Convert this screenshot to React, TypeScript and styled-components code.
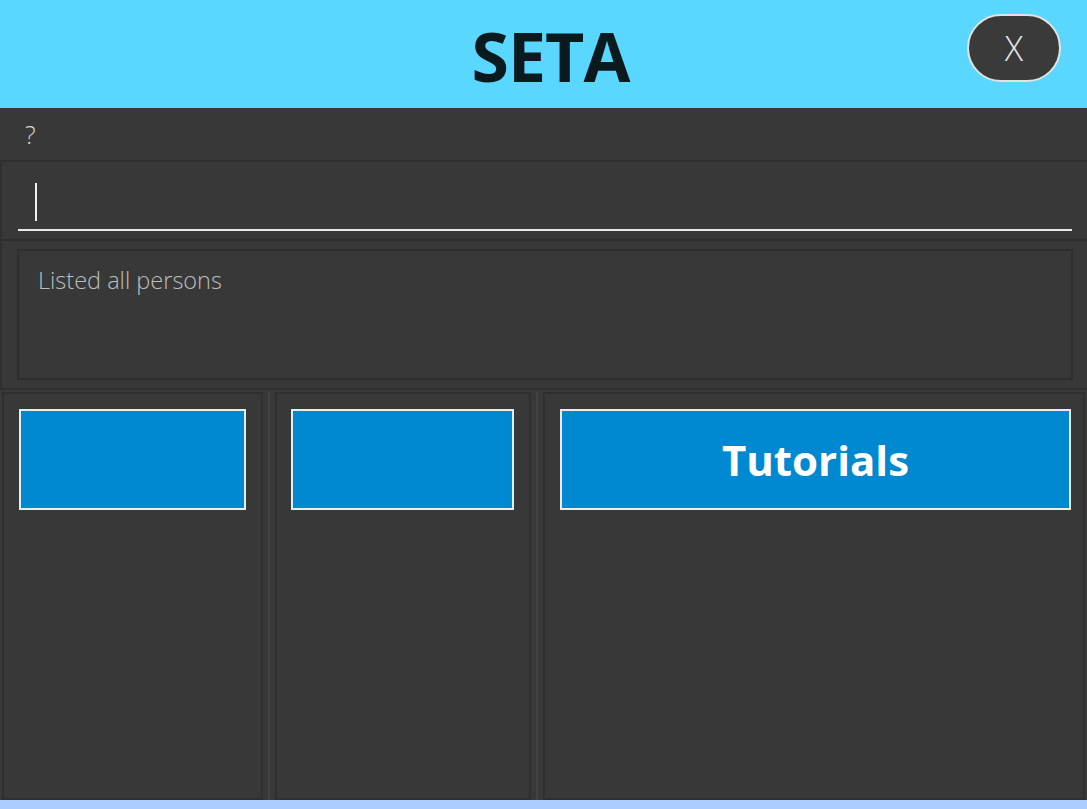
import React from "react";
import styled, { createGlobalStyle } from "styled-components";

const Global = createGlobalStyle`
  html, body { margin: 0; padding: 0; background: #383838; }
  body { font-family: "Open Sans", "Noto Sans", "Liberation Sans", sans-serif; }
  * { box-sizing: border-box; }
`;

const Window = styled.div`
  width: 1087px;
  height: 809px;
  display: flex;
  flex-direction: column;
  background: #383838;
  overflow: hidden;
`;

const Header = styled.header`
  height: 108px;
  flex: none;
  background: #5ad7ff;
  display: flex;
  align-items: center;
  justify-content: center;
  position: relative;
`;

const Title = styled.h1`
  margin: 0;
  font-family: "Open Sans", "Noto Sans", sans-serif;
  font-weight: 700;
  font-size: 68px;
  line-height: 1;
  color: #0a1a1f;
  letter-spacing: -1px;
  margin-left: 14px;
  margin-top: 4px;
`;

const CloseButton = styled.button`
  position: absolute;
  right: 26px;
  top: 14px;
  width: 94px;
  height: 68px;
  border-radius: 34px;
  border: 2px solid #e2e2e2;
  background: #3a3a3a;
  color: #e6e6e6;
  font-family: "Open Sans", sans-serif;
  font-weight: 300;
  font-size: 34px;
  line-height: 1;
  display: flex;
  align-items: center;
  justify-content: center;
  padding: 0;
`;

const MenuBar = styled.div`
  height: 54px;
  flex: none;
  display: flex;
  align-items: center;
  padding-left: 25px;
  border-bottom: 2px solid #2f2f2f;
`;

const MenuItem = styled.span`
  font-size: 25px;
  font-weight: 300;
  color: #d0d0d0;
`;

const CommandSection = styled.div`
  height: 79px;
  flex: none;
  padding: 12px 15px 0 16px;
  border-left: 2px solid #2f2f2f;
  border-bottom: 2px solid #2f2f2f;
`;

const CommandField = styled.div`
  height: 57px;
  border-bottom: 2px solid #e8e8e8;
  display: flex;
  align-items: center;
  padding-left: 17px;
`;

const Caret = styled.div`
  width: 2px;
  height: 38px;
  background: #f0f0f0;
  margin-top: 0px;
`;

const ResultSection = styled.div`
  height: 149px;
  flex: none;
  padding: 8px 14px 8px 15px;
  border-left: 2px solid #2f2f2f;
  border-bottom: 2px solid #2f2f2f;
`;

const ResultBox = styled.div`
  height: 100%;
  border: 2px solid #2e2e2e;
  padding: 13px 19px;
  color: #bdbdbd;
  font-size: 23.5px;
  font-weight: 300;
`;

const Panels = styled.div`
  flex: 1;
  display: flex;
  padding: 2px 2px 0 2px;
`;

const Divider = styled.div`
  width: 12px;
  flex: none;
  display: flex;
  justify-content: center;
  &::before {
    content: "";
    width: 2px;
    background: #434343;
  }
`;

const Panel = styled.section<{ $w: number; $l: number; $r: number }>`
  width: ${(p) => p.$w}px;
  flex: ${(p) => (p.$w ? "none" : "1")};
  border: 2px solid #2f2f2f;
  padding: 15px ${(p) => p.$r}px 0 ${(p) => p.$l}px;
`;

const Card = styled.div`
  height: 101px;
  background: #0088d1;
  border: 2px solid #e4eef5;
  display: flex;
  align-items: center;
  justify-content: center;
  color: #ffffff;
  font-weight: 700;
  font-size: 42px;
`;

const Footer = styled.div`
  height: 9px;
  flex: none;
  background: #aaccff;
`;

export default function App() {
  return (
    <>
      <Global />
      <Window>
        <Header>
          <Title>SETA</Title>
          <CloseButton>X</CloseButton>
        </Header>
        <MenuBar>
          <MenuItem>?</MenuItem>
        </MenuBar>
        <CommandSection>
          <CommandField>
            <Caret />
          </CommandField>
        </CommandSection>
        <ResultSection>
          <ResultBox>Listed all persons</ResultBox>
        </ResultSection>
        <Panels>
          <Panel $w={261} $l={15} $r={15}>
            <Card />
          </Panel>
          <Divider />
          <Panel $w={256} $l={14} $r={15}>
            <Card />
          </Panel>
          <Divider />
          <Panel $w={0} $l={15} $r={12}>
            <Card>Tutorials</Card>
          </Panel>
        </Panels>
        <Footer />
      </Window>
    </>
  );
}
